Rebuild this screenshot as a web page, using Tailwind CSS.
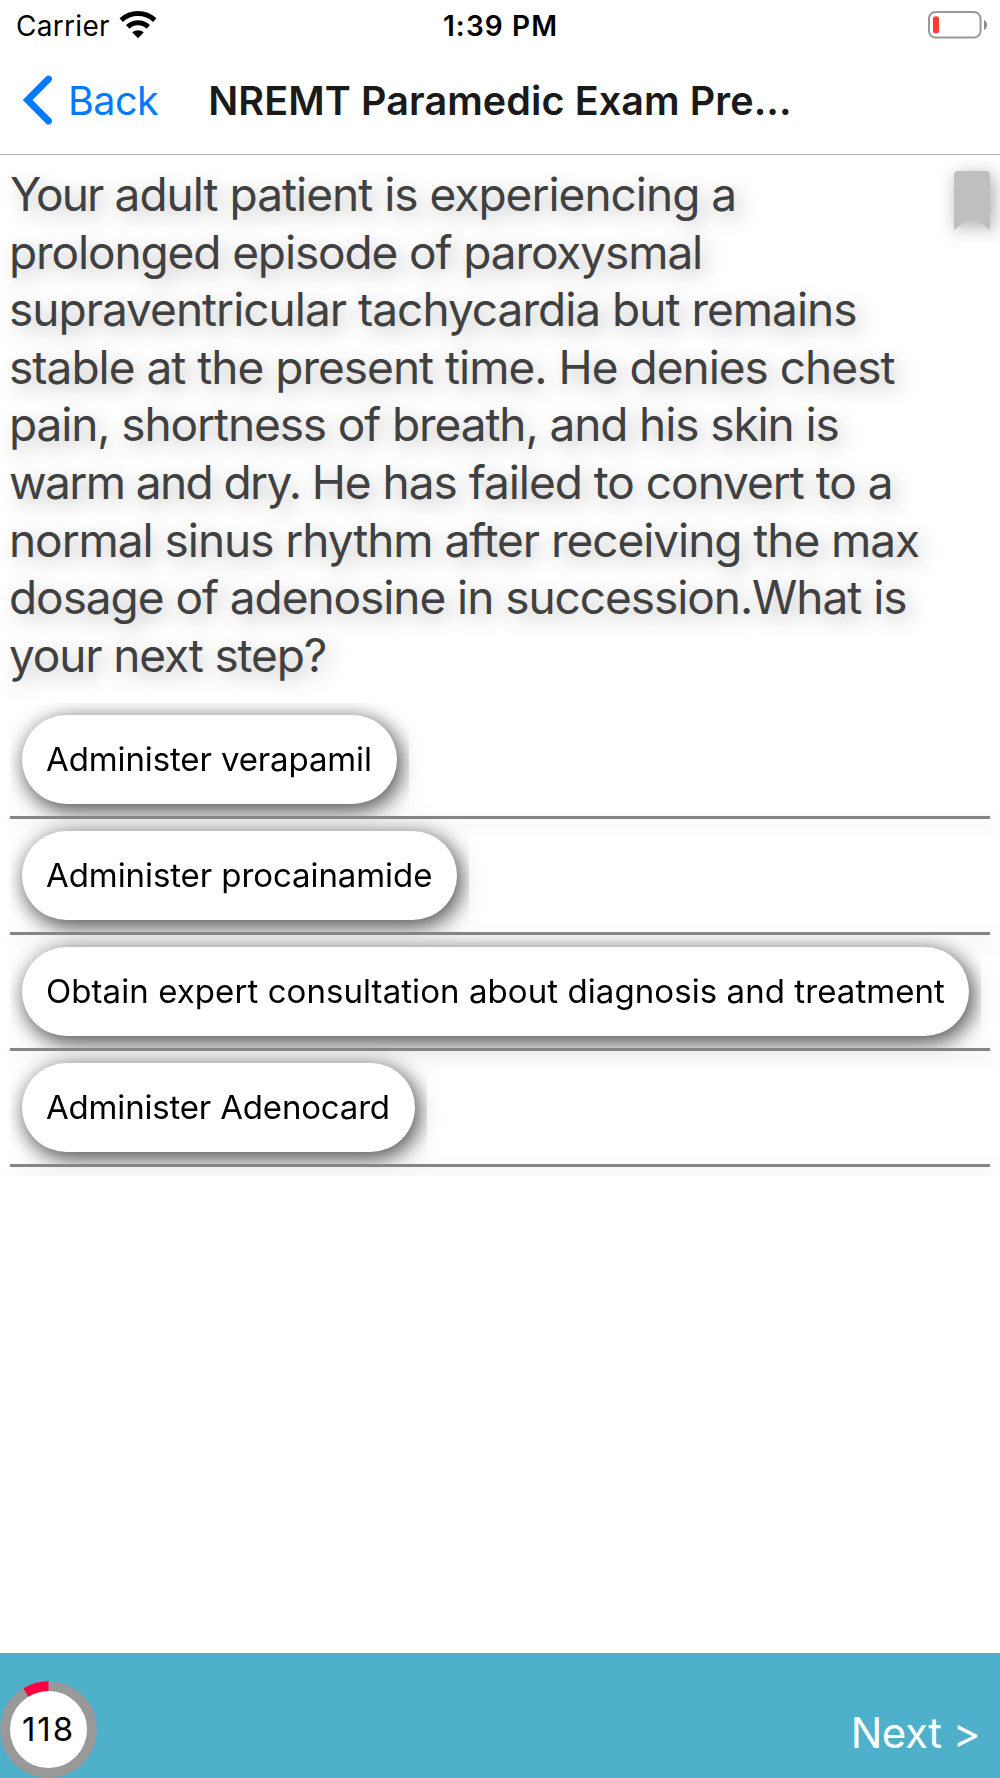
<!DOCTYPE html>
<html lang="en">
<head>
    <meta charset="UTF-8">
    <meta name="viewport" content="width=device-width, initial-scale=1.0">
    <title>NREMT Paramedic Exam Prep</title>
    <script src="https://cdn.jsdelivr.net/npm/@tailwindcss/browser@4"></script>
</head>
<body class="bg-white font-['Inter',sans-serif]">

<div class="flex h-[1778px] w-[1000px] flex-col overflow-hidden">
    <!-- Status bar -->
    <div class="grid h-[50px] shrink-0 grid-cols-3 items-center pr-3 pl-4 text-[28px] leading-[50px] text-black">
        <div class="flex items-center">
            <span class="pt-px tracking-[0.3px]">Carrier</span>
            <svg class="mb-[2px] ml-[9px] h-[28px] w-[38px]" viewBox="0 0 38 28" fill="none">
                <path d="M2.2 9.2C11.8 .4 26.2 .4 35.8 9.2" stroke="#000" stroke-width="5"/>
                <path d="M8.7 15.8C14.6 10.4 23.4 10.4 29.3 15.8" stroke="#000" stroke-width="5"/>
                <path d="M13.2 21.3C16.6 18.4 21.4 18.4 24.8 21.3L19 27.2Z" fill="#000"/>
            </svg>
        </div>
        <div class="pt-px pr-[3px] text-center font-semibold tracking-[1.1px]">1:39 PM</div>
        <div class="flex justify-end">
            <svg class="mb-px h-[28px] w-[60px]" viewBox="0 0 60 28" fill="none">
                <rect x="1" y="1" width="51.5" height="25.5" rx="6.5" stroke="#999" stroke-width="2"/>
                <rect x="5" y="5.3" width="6" height="17" rx="2.6" fill="#ff3b30"/>
                <path d="M56 9C60 10.500 60 17.500 56 19Z" fill="#8a8a8a"/>
            </svg>
        </div>
    </div>

    <!-- Navigation bar -->
    <div class="relative flex h-[105px] shrink-0 items-center justify-center border-b border-[#b5b5b5] pb-px text-[39.5px]">
        <a href="#" class="absolute left-[22px] flex items-center text-[#007aff]">
            <svg class="mb-[3px] h-[50px] w-[30px]" viewBox="0 0 30 50" fill="none" stroke="#007aff" stroke-width="6.800" stroke-linecap="round" stroke-linejoin="miter">
                <path d="M26.500 4L5.600 25L26.500 46"/>
            </svg>
            <span class="ml-[16px] tracking-[-0.5px]">Back</span>
        </a>
        <h1 class="font-semibold tracking-[0.1px] text-[#1a1a1a]">NREMT Paramedic Exam Pre...</h1>
    </div>

    <!-- Question -->
    <div class="flex shrink-0 justify-between pt-[11px] pr-[10px] pl-[10px]">
        <p class="text-[46px] leading-[57.6px] whitespace-nowrap text-[#404040] [text-shadow:5px_6px_20px_rgba(0,0,0,0.28)]">
            <span class="block tracking-[-1px]"><span class="tracking-[-1.8px]">Your</span> adult patient is experiencing a</span>
            <span class="-ml-px block tracking-[-1.12px]">prolonged episode of paroxysmal</span>
            <span class="-ml-px block tracking-[-1px]">supraventricular tachycardia but remains</span>
            <span class="-ml-px block tracking-[-1px]">stable at the present time. He denies chest</span>
            <span class="-ml-px block tracking-[-1.11px]">pain, shortness of breath, and his skin is</span>
            <span class="-ml-px block tracking-[-1.03px]"><span class="tracking-[-1.6px]">warm and dry. </span>He has failed to convert to a</span>
            <span class="-ml-px block tracking-[-1.06px]">normal sinus rhythm after receiving the max</span>
            <span class="-ml-px block tracking-[-1.06px]">dosage of adenosine in succession.What is</span>
            <span class="-ml-px block tracking-[-1.15px]">your next step?</span>
        </p>
        <svg class="mt-[5px] h-[60px] w-[36px] overflow-visible drop-shadow-[3px_4px_9px_rgba(0,0,0,0.35)]" viewBox="0 0 36 60">
            <path d="M0 59V4Q0 0 4 0H32Q36 0 36 4V59L18 46Z" fill="#bfbfbf"/>
        </svg>
    </div>

    <!-- Answers -->
    <div class="-mt-[10px] h-[502px] shrink-0 overflow-hidden px-[10px] pt-[29px] text-[33px] text-black">
        <ul class="drop-shadow-[5px_6px_9px_rgba(0,0,0,0.16)]">
            <li class="h-[116px] border-b-3 border-[#858585]">
                <div class="inline-block h-[113px] overflow-hidden p-[12px]">
                    <button class="block h-[89px] w-[375px] rounded-full bg-white pl-[24px] text-left tracking-[-0.12px] whitespace-nowrap shadow-[3px_5px_22px_rgba(0,0,0,0.65)]">Administer verapamil</button>
                </div>
            </li>
            <li class="h-[116px] border-b-3 border-[#858585]">
                <div class="inline-block h-[113px] overflow-hidden p-[12px]">
                    <button class="block h-[89px] w-[435px] rounded-full bg-white pl-[24px] text-left tracking-[-0.08px] whitespace-nowrap shadow-[3px_5px_22px_rgba(0,0,0,0.65)]">Administer procainamide</button>
                </div>
            </li>
            <li class="h-[116px] border-b-3 border-[#858585]">
                <div class="inline-block h-[113px] overflow-hidden p-[12px]">
                    <button class="block h-[89px] w-[947px] rounded-full bg-white pl-[24px] text-left tracking-[0.07px] whitespace-nowrap shadow-[3px_5px_22px_rgba(0,0,0,0.65)]">Obtain expert consultation about diagnosis and treatment</button>
                </div>
            </li>
            <li class="h-[116px] border-b-3 border-[#858585]">
                <div class="inline-block h-[113px] overflow-hidden p-[12px]">
                    <button class="block h-[89px] w-[393px] rounded-full bg-white pl-[24px] text-left tracking-[-0.18px] whitespace-nowrap shadow-[3px_5px_22px_rgba(0,0,0,0.65)]">Administer Adenocard</button>
                </div>
            </li>
        </ul>
    </div>

    <!-- Bottom bar -->
    <div class="mt-auto flex h-[125px] shrink-0 items-end justify-between bg-[#4fb0cb] pr-[20px]">
        <div class="relative flex h-[97px] w-[97px] items-center justify-center">
            <svg class="absolute inset-0 h-[97px] w-[97px]" viewBox="0 0 97 97" fill="none">
                <circle cx="48.500" cy="48.500" r="43.400" fill="#fff" stroke="#999" stroke-width="9.800"/>
                <path d="M48.500 5.100A43.400 43.400 0 0 0 25.900 11.450" stroke="#ff0040" stroke-width="9.800"/>
            </svg>
            <span class="relative text-[33px] tracking-[1.9px] text-black">118</span>
        </div>
        <a href="#" class="mb-[20px] text-[42px] leading-[50px] tracking-[-0.5px] text-white">Next &gt;</a>
    </div>
</div>

</body>
</html>
